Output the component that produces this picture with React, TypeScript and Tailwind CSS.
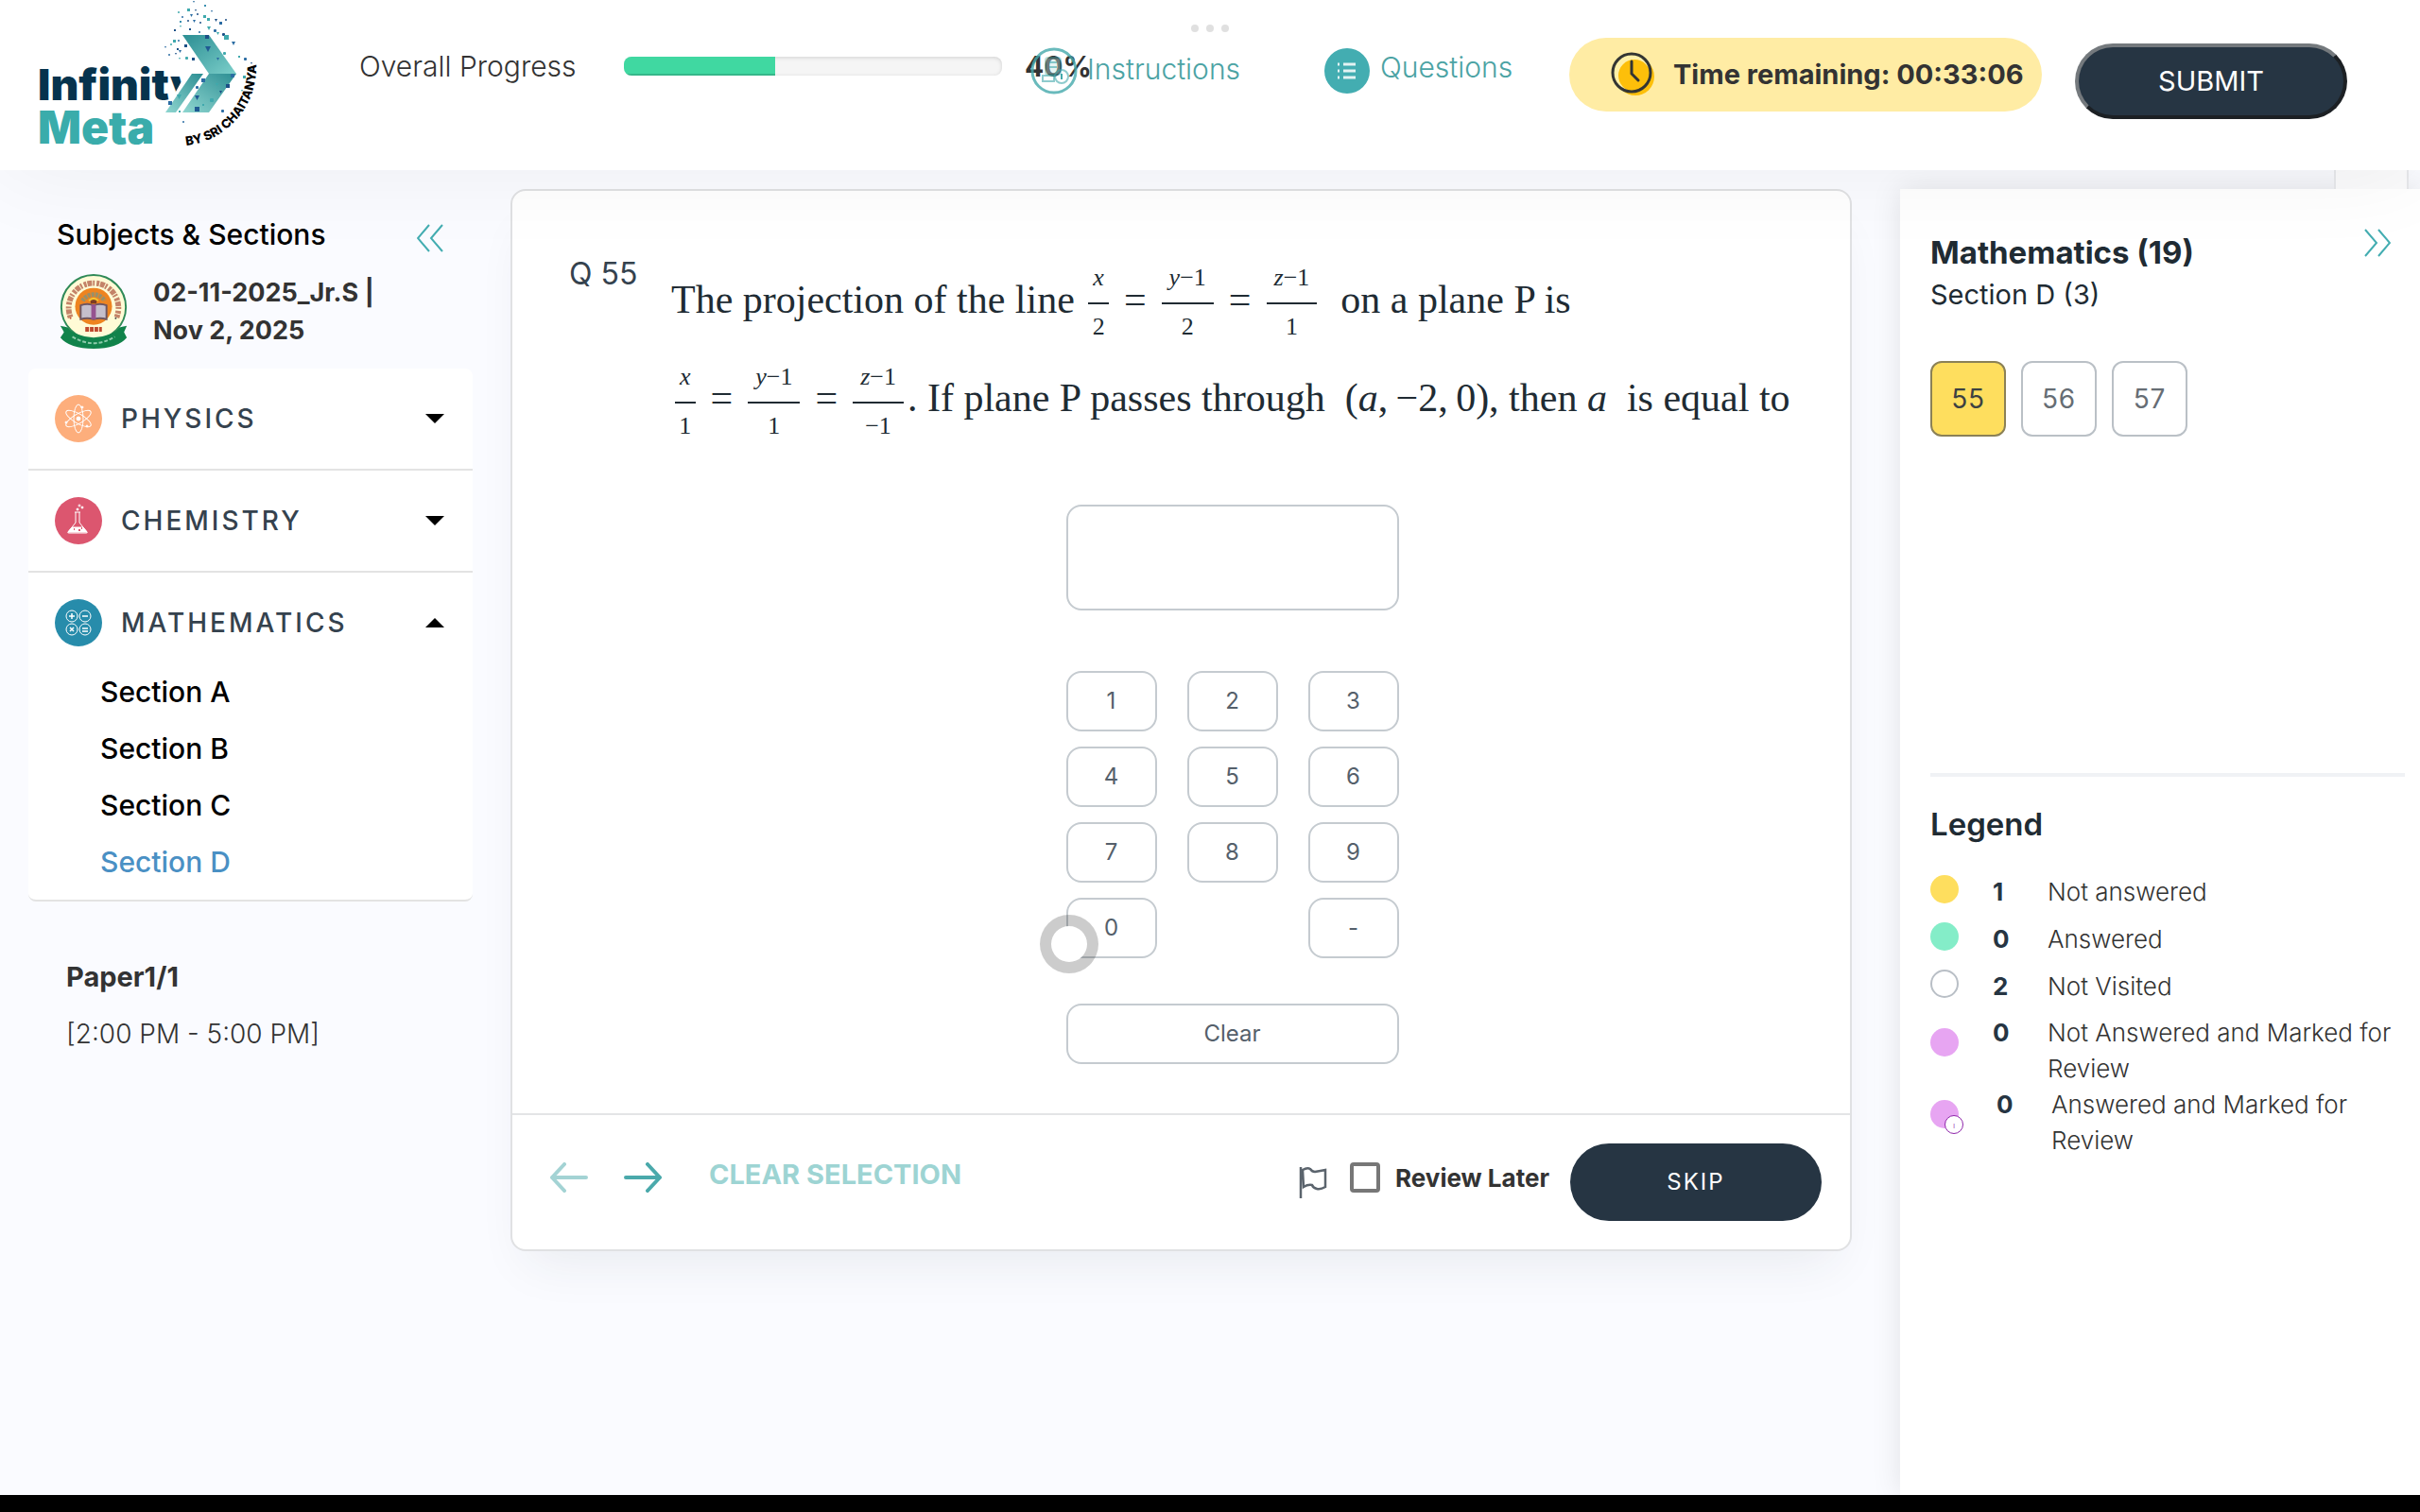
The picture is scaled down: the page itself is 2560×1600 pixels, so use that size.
import React, { useState } from 'react';

const PARTICLES: [number, number, number, string][] = [
  [204, 1, 2, '#2f6f9f'], [188, 12, 2, '#3fa9ad'], [198, 9, 3, '#3fa9ad'], [206, 10, 2, '#1c4f86'], [216, 5, 2, '#3a8fb0'],
  [192, 17, 2, '#2b6ca3'], [201, 15, 3, '#2b6ca3'], [208, 14, 2, '#1c4f86'], [215, 16, 3, '#3fa9ad'], [223, 11, 2, '#2b6ca3'],
  [190, 22, 2, '#3a8fb0'], [198, 21, 2, '#1c4f86'], [204, 21, 3, '#2b6ca3'], [211, 23, 2, '#1c4f86'], [219, 19, 3, '#3fa9ad'],
  [227, 20, 3, '#1c4f86'], [232, 23, 3, '#2b6ca3'], [238, 20, 2, '#1c4f86'], [219, 28, 4, '#3fa9ad'], [226, 31, 3, '#2b6ca3'],
  [184, 31, 2, '#1c4f86'], [190, 27, 2, '#3fa9ad'], [200, 30, 2, '#1c4f86'], [210, 33, 2, '#2b6ca3'], [229, 34, 3, '#3fa9ad'],
  [235, 35, 3, '#1c4f86'], [237, 37, 5, '#3fa9ad'], [245, 44, 4, '#2b6ca3'], [183, 42, 3, '#3fa9ad'], [188, 42, 2, '#2b6ca3'],
  [174, 49, 2, '#2b6ca3'], [180, 46, 2, '#3fa9ad'], [187, 51, 2, '#1c4f86'], [189, 53, 3, '#2b6ca3'], [195, 47, 3, '#1c4f86'],
  [178, 57, 2, '#2b6ca3'], [185, 56, 2, '#1c4f86'], [196, 60, 3, '#3fa9ad'], [203, 61, 3, '#1c4f86'], [189, 61, 2, '#3fa9ad'],
  [252, 59, 2, '#3fa9ad'], [258, 61, 3, '#2b6ca3'], [265, 66, 2, '#1c4f86'], [264, 73, 3, '#2b6ca3'], [257, 80, 3, '#3fa9ad'],
  [217, 49, 6, '#1f5a93'], [217, 37, 4, '#1c4f86'], [236, 55, 3, '#3fa9ad'], [229, 61, 3, '#2b6ca3'], [244, 78, 4, '#2b6ca3'],
  [239, 89, 4, '#1c4f86'], [228, 88, 3, '#3fa9ad'], [213, 83, 4, '#2b6ca3'], [207, 91, 3, '#2b6ca3'], [206, 101, 5, '#1f5a93'],
  [222, 104, 4, '#3fa9ad'], [206, 113, 5, '#1f5a93'], [187, 100, 5, '#3fa9ad'], [178, 107, 4, '#2b6ca3'], [234, 116, 3, '#2b6ca3'],
  [255, 95, 2, '#3fa9ad'], [193, 128, 2, '#2b6ca3'], [189, 117, 2, '#3fa9ad'], [232, 96, 3, '#1c4f86'], [214, 110, 2, '#3fa9ad'],
];

const Logo = () => (
  <svg viewBox="30 0 250 160" className="h-[160px] w-[250px] shrink-0" role="img" aria-label="Infinity Meta by Sri Chaitanya">
    <defs>
      <linearGradient id="chevronTop" x1="0" y1="0" x2="1" y2="1">
        <stop offset="0" stopColor="#2c8e93" />
        <stop offset="1" stopColor="#7ccfca" />
      </linearGradient>
      <linearGradient id="chevronBottom" x1="1" y1="0" x2="0" y2="1">
        <stop offset="0" stopColor="#2c8e93" />
        <stop offset="1" stopColor="#8fd6d0" />
      </linearGradient>
      <path id="tagline" d="M197 154 A83 83 0 0 0 271 72" />
    </defs>
    <text x="40" y="106" fontFamily="Inter, sans-serif" fontWeight="900" fontSize="46" fill="#06334d">Infinity</text>
    <text x="40" y="152" fontFamily="Inter, sans-serif" fontWeight="900" fontSize="48" fill="#3aacab">Meta</text>
    <path d="M201 70h28v52h-57z" fill="#fff" />
    <path d="M193 37h28l29 41h-29z" fill="url(#chevronTop)" />
    <path d="M221 78h29l-29 41h-28z" fill="url(#chevronBottom)" />
    <path d="M203 78h12l-29 41h-11z" fill="url(#chevronBottom)" />
    {PARTICLES.map(([x, y, size, fill], i) =>
      i % 3 === 0 ? (
        <path key={i} d={`M${x} ${y}h${size}l-${size / 2} ${size}z`} fill={fill} />
      ) : (
        <rect key={i} x={x} y={y} width={size} height={size} rx={i % 2} fill={fill} />
      ),
    )}
    <text fontFamily="Inter, sans-serif" fontWeight="800" fontSize="13" fill="#000">
      <textPath href="#tagline">BY SRI CHAITANYA</textPath>
    </text>
  </svg>
);

const InstructionsIcon = () => (
  <svg viewBox="0 0 50 50" className="h-[50px] w-[50px] shrink-0" fill="none" stroke="#43a9ab" strokeWidth="2" aria-hidden="true">
    <circle cx="25" cy="25" r="23" strokeWidth="3" opacity="0.8" />
    <rect x="16" y="11" width="16" height="18" rx="3" fill="#bfe3e3" opacity="0.4" />
    <path d="M20 16h8M20 21h8M13 36v-6h12v6z" opacity="0.6" />
    <circle cx="33" cy="31" r="7" opacity="0.6" />
    <path d="M33 28v6" />
  </svg>
);

const QuestionsIcon = () => (
  <svg viewBox="0 0 50 50" className="h-[50px] w-[50px] shrink-0" aria-hidden="true">
    <circle cx="25" cy="25" r="24" fill="#43adb1" />
    <path d="M21 18h13M21 25h13M21 32h13" stroke="#e3f3f3" strokeWidth="3" />
    <path d="M15 18h2M15 25h2M15 32h2" stroke="#e3f3f3" strokeWidth="3" />
  </svg>
);

const ClockIcon = () => (
  <svg viewBox="0 0 48 48" className="h-12 w-12 shrink-0" aria-hidden="true">
    <circle cx="26" cy="26" r="20" fill="#fdbf0a" />
    <circle cx="22" cy="22" r="20" fill="#fff0a8" />
    <circle cx="25" cy="25" r="17" fill="#fdbf0a" />
    <circle cx="22" cy="22" r="20" fill="none" stroke="#333533" strokeWidth="3" />
    <path d="M22 10v13l7 7" fill="none" stroke="#333533" strokeWidth="3" strokeLinecap="round" />
  </svg>
);

const Emblem = () => (
  <svg viewBox="0 0 74 82" className="h-20 w-[74px] shrink-0" role="img" aria-label="Exam board emblem">
    <path d="M1 56l8 2q28 18 56 0l8-2-3 7 3 6q-10 12-36 12T1 69l4-6z" fill="#11834b" />
    <circle cx="37" cy="36" r="35" fill="#fffbd6" stroke="#2f8a58" strokeWidth="2" />
    <path d="M12 47A27 27 0 1 1 62 47" fill="none" stroke="#b5654c" strokeWidth="6" strokeDasharray="3 1 5 1 2 2" opacity="0.8" />
    <path d="M5 57q32 24 64 0v6l-4 8q-28 16-56 0l-4-8z" fill="#11834b" />
    <path d="M8 54q29 24 58 0l-4 4q-25 18-50 0z" fill="#fffbd6" />
    <circle cx="37" cy="35" r="20" fill="#ee8420" />
    <path d="M25 29a14 14 0 0 1 24 0" fill="none" stroke="#98906a" strokeWidth="5" strokeDasharray="3 1" />
    <path d="M33 27h8l-1 5h-6z" fill="#7d3c22" />
    <path d="M32 29q5-5 10 0" fill="none" stroke="#f5c433" strokeWidth="2" />
    <path d="M23 34q7-3 14 0 7-3 14 0v15q-7-2-14 0-7-2-14 0z" fill="#c5bfcb" stroke="#6e5660" strokeWidth="2" />
    <path d="M37 33v16" stroke="#96538f" strokeWidth="5" />
    <path d="M28 60h18" stroke="#bf4a30" strokeWidth="5" strokeDasharray="4 1" />
    <path d="M14 68q23 14 46 0" fill="none" stroke="#8ccbaa" strokeWidth="2" strokeDasharray="4 2" />
    <circle cx="12" cy="48" r="1" fill="#c4543a" />
    <circle cx="61" cy="48" r="1" fill="#444" />
  </svg>
);

const PhysicsIcon = () => (
  <svg viewBox="0 0 50 50" className="h-[50px] w-[50px]" fill="none" stroke="#fff" strokeWidth="1" aria-hidden="true">
    <circle cx="25" cy="25" r="25" fill="#fdae7c" stroke="none" />
    <ellipse cx="25" cy="25" rx="5" ry="15" />
    <ellipse cx="25" cy="25" rx="5" ry="15" transform="rotate(60 25 25)" />
    <ellipse cx="25" cy="25" rx="5" ry="15" transform="rotate(-60 25 25)" />
    <circle cx="25" cy="25" r="2" fill="#fff" />
    <circle cx="29" cy="13" r="1" fill="#fff" />
    <circle cx="12" cy="29" r="1" fill="#fff" />
    <circle cx="34" cy="33" r="1" fill="#fff" />
  </svg>
);

const ChemistryIcon = () => (
  <svg viewBox="0 0 50 50" className="h-[50px] w-[50px]" fill="none" stroke="#fff" strokeWidth="1" aria-hidden="true">
    <circle cx="25" cy="25" r="25" fill="#dc566f" stroke="none" />
    <path d="M21 16h6M22 16v11l-8 10q-1 1 1 1h18q2 0 1-1l-8-10V16" />
    <path d="M18 32h12l4 5H14z" fill="#fff" />
    <path d="M20 34h1M25 35h2M28 33h1" stroke="#dc566f" strokeWidth="2" />
    <circle cx="24" cy="13" r="1" fill="#fff" />
    <circle cx="26" cy="9" r="1" />
    <circle cx="29" cy="11" r="1" fill="#fff" />
  </svg>
);

const MathIcon = () => (
  <svg viewBox="0 0 50 50" className="h-[50px] w-[50px]" fill="none" stroke="#fff" strokeWidth="1" aria-hidden="true">
    <circle cx="25" cy="25" r="25" fill="#278cab" stroke="none" />
    <circle cx="18" cy="18" r="6" />
    <circle cx="32" cy="18" r="6" />
    <circle cx="18" cy="32" r="6" />
    <circle cx="32" cy="32" r="6" />
    <path strokeWidth="1.5" d="M15 18h6M18 15v6M29 18h6M16 30l4 4M20 30l-4 4M29 31h6M29 34h6" />
  </svg>
);

const DoubleChevron = ({ flip = false }: { flip?: boolean }) => (
  <svg
    viewBox="0 0 28 30"
    className={flip ? 'h-[30px] w-7 rotate-180' : 'h-[30px] w-7'}
    fill="none"
    stroke="#43adb1"
    strokeWidth="2"
    aria-hidden="true"
  >
    <path d="M13 1L1 15l12 14M27 1L15 15l12 14" />
  </svg>
);

const Arrow = ({ flip = false }: { flip?: boolean }) => (
  <svg
    viewBox="0 0 40 32"
    className={flip ? 'h-8 w-10 rotate-180' : 'h-8 w-10'}
    fill="none"
    stroke="#4aa9ab"
    strokeWidth="4"
    strokeLinecap="round"
    strokeLinejoin="round"
    aria-hidden="true"
  >
    <path d="M2 16h36M25 2l13 14-13 14" />
  </svg>
);

const FlagIcon = () => (
  <svg viewBox="0 0 30 34" className="h-[34px] w-[30px]" fill="none" stroke="#5b646d" strokeWidth="2.5" aria-hidden="true">
    <path d="M2 1v33M4 4q5-3 8-1 2 3 5 3 6-1 11-2v18q-5 3-9 2t-5-4q-4-1-9 2z" />
  </svg>
);

type FracProps = { top: React.ReactNode; bottom: React.ReactNode; wide?: boolean };

const Frac = ({ top, bottom, wide = false }: FracProps) => (
  <span className="mx-1 inline-flex flex-col items-stretch align-middle text-center text-[26px]">
    <span className={wide ? 'border-b-2 border-[#202b33] px-2 pb-1 leading-[44px]' : 'border-b-2 border-[#202b33] px-[5px] pb-1 leading-[44px]'}>
      {top}
    </span>
    <span className="leading-[48px]">{bottom}</span>
  </span>
);

const Eq = () => <span className="mx-3">=</span>;

const subjects = [
  { name: 'PHYSICS', icon: <PhysicsIcon /> },
  { name: 'CHEMISTRY', icon: <ChemistryIcon /> },
  { name: 'MATHEMATICS', icon: <MathIcon /> },
];

const sections = ['Section A', 'Section B', 'Section C', 'Section D'];

const keys = ['1', '2', '3', '4', '5', '6', '7', '8', '9', '0', '', '-'];

const legend = [
  { count: 1, label: 'Not answered', dot: 'bg-[#fede5e]' },
  { count: 0, label: 'Answered', dot: 'bg-[#84edc8]' },
  { count: 2, label: 'Not Visited', dot: 'border-2 border-[#b9bfc6] bg-white' },
];

const markedLegend = [
  { count: 0, label: 'Not Answered and Marked for Review', info: false },
  { count: 0, label: 'Answered and Marked for Review', info: true },
];

const Header = () => {
  const progress = 40;

  return (
    <header className="relative z-10 flex h-[180px] items-start bg-white pl-[30px] pr-[77px] shadow-[0_0_100px_rgba(0,0,0,0.06)]">
      <Logo />

      {/* Overall progress */}
      <div className="ml-[100px] flex h-[140px] w-[710px] shrink-0 items-center whitespace-nowrap">
        <span className="w-[280px] shrink-0 text-[30px] font-light text-[#333]">Overall Progress</span>
        <div className="h-5 w-[400px] shrink-0 overflow-hidden rounded-lg bg-[#f5f5f5] shadow-[inset_0_1px_4px_rgba(0,0,0,0.15)]">
          <div className="h-full bg-[#40d8a1] shadow-[inset_0_-2px_0_rgba(0,0,0,0.15)]" style={{ width: `${progress}%` }} />
        </div>
        <span className="ml-6 text-[30px] font-bold text-[#333]">{progress}%</span>
      </div>

      {/* Help links */}
      <nav className="flex h-[150px] shrink-0 items-center text-[30px] font-light text-[#4ba3a4]">
        <a href="#instructions" className="flex w-[310px] items-center gap-[10px]">
          <InstructionsIcon />
          <span className="pb-1">Instructions</span>
        </a>
        <a href="#questions" className="flex items-center gap-[10px]">
          <QuestionsIcon />
          <span className="pb-2">Questions</span>
        </a>
      </nav>

      <div className="ml-auto mt-10 flex h-[78px] w-[500px] shrink-0 items-center rounded-full bg-[#ffeca4] pl-11 text-[29px] font-bold text-[#333]">
        <ClockIcon />
        <span className="ml-[18px] whitespace-nowrap">Time remaining: 00:33:06</span>
      </div>
      <button className="ml-[35px] mt-[46px] h-20 w-[288px] shrink-0 rounded-full border-4 border-b-[#1c2024] border-l-[#74797d] border-r-[#1c2024] border-t-[#74797d] bg-[#263543] text-[29px] text-white">
        SUBMIT
      </button>

      {/* Window handle */}
      <div className="absolute left-1/2 top-[26px] flex -translate-x-1/2 gap-2">
        <span className="h-2 w-2 rounded-full bg-[#e0e0e0]" />
        <span className="h-2 w-2 rounded-full bg-[#e0e0e0]" />
        <span className="h-2 w-2 rounded-full bg-[#e0e0e0]" />
      </div>
    </header>
  );
};

const Sidebar = ({ open, setOpen }: { open: string; setOpen: (name: string) => void }) => (
  <aside className="w-[470px] shrink-0">
    <div className="flex items-center justify-between pl-[30px] pr-[31px] pt-7">
      <h2 className="text-[30px] font-medium leading-10 text-black">Subjects &amp; Sections</h2>
      <button aria-label="Collapse subjects" className="pt-2">
        <DoubleChevron />
      </button>
    </div>
    <div className="flex items-center gap-[26px] pb-5 pl-8 pt-[22px]">
      <Emblem />
      <p className="text-[27px] font-bold leading-10 text-[#333]">
        02-11-2025_Jr.S |<br />
        Nov 2, 2025
      </p>
    </div>

    <div className="overflow-hidden rounded-lg border-b-2 border-[#e3e3e3] bg-white">
      {subjects.map(({ name, icon }, i) => (
        <div key={name} className={i < 2 ? 'border-b-2 border-[#e3e3e3]' : 'pb-[10px]'}>
          <button
            className="flex h-[106px] w-full items-center pl-7 pr-[30px] text-[28px] font-medium tracking-[3px] text-[#35424e]"
            onClick={() => setOpen(open === name ? '' : name)}
          >
            {icon}
            <span className="ml-5">{name}</span>
            <svg viewBox="0 0 20 10" className={open === name ? 'ml-auto h-[10px] w-5 rotate-180' : 'ml-auto h-[10px] w-5'} aria-hidden="true">
              <path d="M0 0h20L10 10z" fill="#000" />
            </svg>
          </button>
          {open === name && (
            <ul className="-mt-[10px] pl-[76px] text-[30px] font-medium leading-[60px] text-black">
              {sections.map((section) => (
                <li key={section} className={section === 'Section D' ? 'text-[#4a90c4]' : ''}>
                  <a href={`#${section.slice(-1)}`}>{section}</a>
                </li>
              ))}
            </ul>
          )}
        </div>
      ))}
    </div>

    <div className="pl-10 pt-[50px] leading-[60px] text-[#333]">
      <p className="text-[29px] font-bold">Paper1/1</p>
      <p className="text-[28px] font-light">[2:00 PM - 5:00 PM]</p>
    </div>
  </aside>
);

const QuestionCard = () => {
  const [answer, setAnswer] = useState('');

  return (
    <main className="relative ml-10 mr-[51px] min-w-0 flex-1">
      <div className="rounded-2xl border-2 border-[#e0e1e3] bg-white shadow-[0_30px_50px_-18px_rgba(38,53,67,0.08)]">
        <div className="flex min-h-[332px] pl-[60px] pt-16">
          <h1 className="w-[108px] shrink-0 pt-1 text-[32px] leading-10 text-[#35424e]">Q 55</h1>
          <p className="whitespace-nowrap font-['Liberation_Serif',serif] text-[42px] leading-[102px] text-[#202b33]">
            The projection of the line{' '}
            <Frac top={<i>x</i>} bottom="2" />
            <Eq />
            <Frac wide top={<><i>y</i>−1</>} bottom="2" />
            <Eq />
            <Frac wide top={<><i>z</i>−1</>} bottom="1" />
            &nbsp; on a plane P is
            <br />
            <Frac top={<i>x</i>} bottom="1" />
            <Eq />
            <Frac wide top={<><i>y</i>−1</>} bottom="1" />
            <Eq />
            <Frac wide top={<><i>z</i>−1</>} bottom="−1" />
            . If plane P passes through &nbsp;(<i>a</i>,&thinsp;−2,&thinsp;0), then <i>a</i>&nbsp; is equal to
          </p>
        </div>

        {/* Numeric answer pad */}
        <div className="ml-[108px] flex flex-col items-center pb-[52px] text-2xl text-[#55606b]">
          <input
            aria-label="Answer"
            readOnly
            value={answer}
            className="h-28 w-[352px] rounded-2xl border-2 border-[#c5cbd0] bg-white px-6 text-[28px]"
          />
          <div className="mt-16 grid grid-cols-3 gap-x-8 gap-y-4">
            {keys.map((key) =>
              key ? (
                <button key={key} className="h-16 w-24 rounded-2xl border-2 border-[#c5cbd0]" onClick={() => setAnswer(answer + key)}>
                  {key}
                </button>
              ) : (
                <span key="gap" />
              ),
            )}
          </div>
          <button className="mt-12 h-16 w-[352px] rounded-2xl border-2 border-[#c5cbd0]" onClick={() => setAnswer('')}>
            Clear
          </button>
        </div>

        <div className="flex h-[144px] items-center border-t-2 border-[#e3e4e6] pl-10 pr-[30px]">
          <button aria-label="Previous question" className="pb-[10px] opacity-50">
            <Arrow flip />
          </button>
          <button aria-label="Next question" className="ml-[38px] pb-[10px]">
            <Arrow />
          </button>
          <button className="ml-[50px] pb-4 text-[29px] font-bold text-[#9dd4d3]">CLEAR SELECTION</button>
          <div className="ml-auto flex items-center">
            <FlagIcon />
            <input
              id="review"
              type="checkbox"
              className="mb-[10px] ml-6 h-8 w-8 appearance-none rounded border-4 border-[#777] checked:bg-[#777]"
            />
            <label htmlFor="review" className="ml-4 mr-[22px] pb-[10px] text-[26px] font-bold text-[#333]">
              Review Later
            </label>
            <button className="h-[82px] w-[266px] shrink-0 rounded-full bg-[#263543] text-2xl tracking-[2px] text-white">SKIP</button>
          </div>
        </div>
      </div>

      {/* Touch pointer */}
      <span className="absolute left-[560px] top-[768px] h-[62px] w-[62px] rounded-full border-12 border-black/20 bg-white bg-clip-padding" />
    </main>
  );
};

const QuestionPanel = () => (
  <aside className="relative w-[550px] shrink-0 self-stretch bg-white pl-8 pr-4 shadow-[0_0_30px_rgba(0,0,0,0.1)]">
    <span className="absolute -top-5 right-3 h-5 w-[79px] border-x-2 border-[#e6e7ea] bg-[#fafafb]" />
    <button aria-label="Collapse panel" className="absolute right-[31px] top-[42px]">
      <DoubleChevron flip />
    </button>
    <h2 className="pt-[45px] text-[33px] font-bold leading-[44px] text-[#202b33]">Mathematics (19)</h2>
    <p className="text-[29px] leading-[46px] text-[#202b33]">Section D (3)</p>

    <div className="mt-[47px] flex gap-4 text-[28px] tracking-wide">
      <button className="h-20 w-20 rounded-xl border-2 border-[#8b8156] bg-[#fede5e] text-[#3d4142]">55</button>
      <button className="h-20 w-20 rounded-xl border-2 border-[#bac0c6] text-[#666d74]">56</button>
      <button className="h-20 w-20 rounded-xl border-2 border-[#bac0c6] text-[#666d74]">57</button>
    </div>

    <div className="mt-[356px] border-t-4 border-[#f0f2f5]">
      <h3 className="pt-7 text-[33px] font-semibold leading-[44px] text-[#202b33]">Legend</h3>
      <ul className="pt-6 text-[26px] font-light text-[#333]">
        {legend.map(({ count, label, dot }) => (
          <li key={label} className="flex h-[50px] items-center">
            <span className={`mb-1 h-[30px] w-[30px] rounded-full ${dot}`} />
            <span className="ml-9 w-[58px] font-bold text-[#263543]">{count}</span>
            <span>{label}</span>
          </li>
        ))}
        {markedLegend.map(({ count, label, info }) => (
          <li key={label} className={info ? 'flex items-start leading-[38px]' : 'mt-[6px] flex items-start leading-[38px]'}>
            <span className="relative mt-[14px] h-[30px] w-[30px] shrink-0 rounded-full bg-[#e7a5f2]">
              {info && (
                <span className="absolute left-[15px] top-4 flex h-5 w-5 items-center justify-center rounded-full border border-[#8e24aa] bg-white text-[9px] leading-none text-[#8e24aa]">
                  ı
                </span>
              )}
            </span>
            <span className={info ? 'ml-10 w-[58px] shrink-0 font-bold text-[#263543]' : 'ml-9 w-[58px] shrink-0 font-bold text-[#263543]'}>
              {count}
            </span>
            <span>{label}</span>
          </li>
        ))}
      </ul>
    </div>
  </aside>
);

const App = () => {
  const [open, setOpen] = useState('MATHEMATICS');

  return (
    <div className="flex min-h-screen flex-col bg-[#fafbff] font-[Inter,sans-serif]">
      <Header />
      <div className="flex flex-1 items-start pl-[30px] pt-5">
        <Sidebar open={open} setOpen={setOpen} />
        <QuestionCard />
        <QuestionPanel />
      </div>
      {/* System navigation bar */}
      <div className="relative z-10 h-[18px] bg-black" />
    </div>
  );
};

export default App;
